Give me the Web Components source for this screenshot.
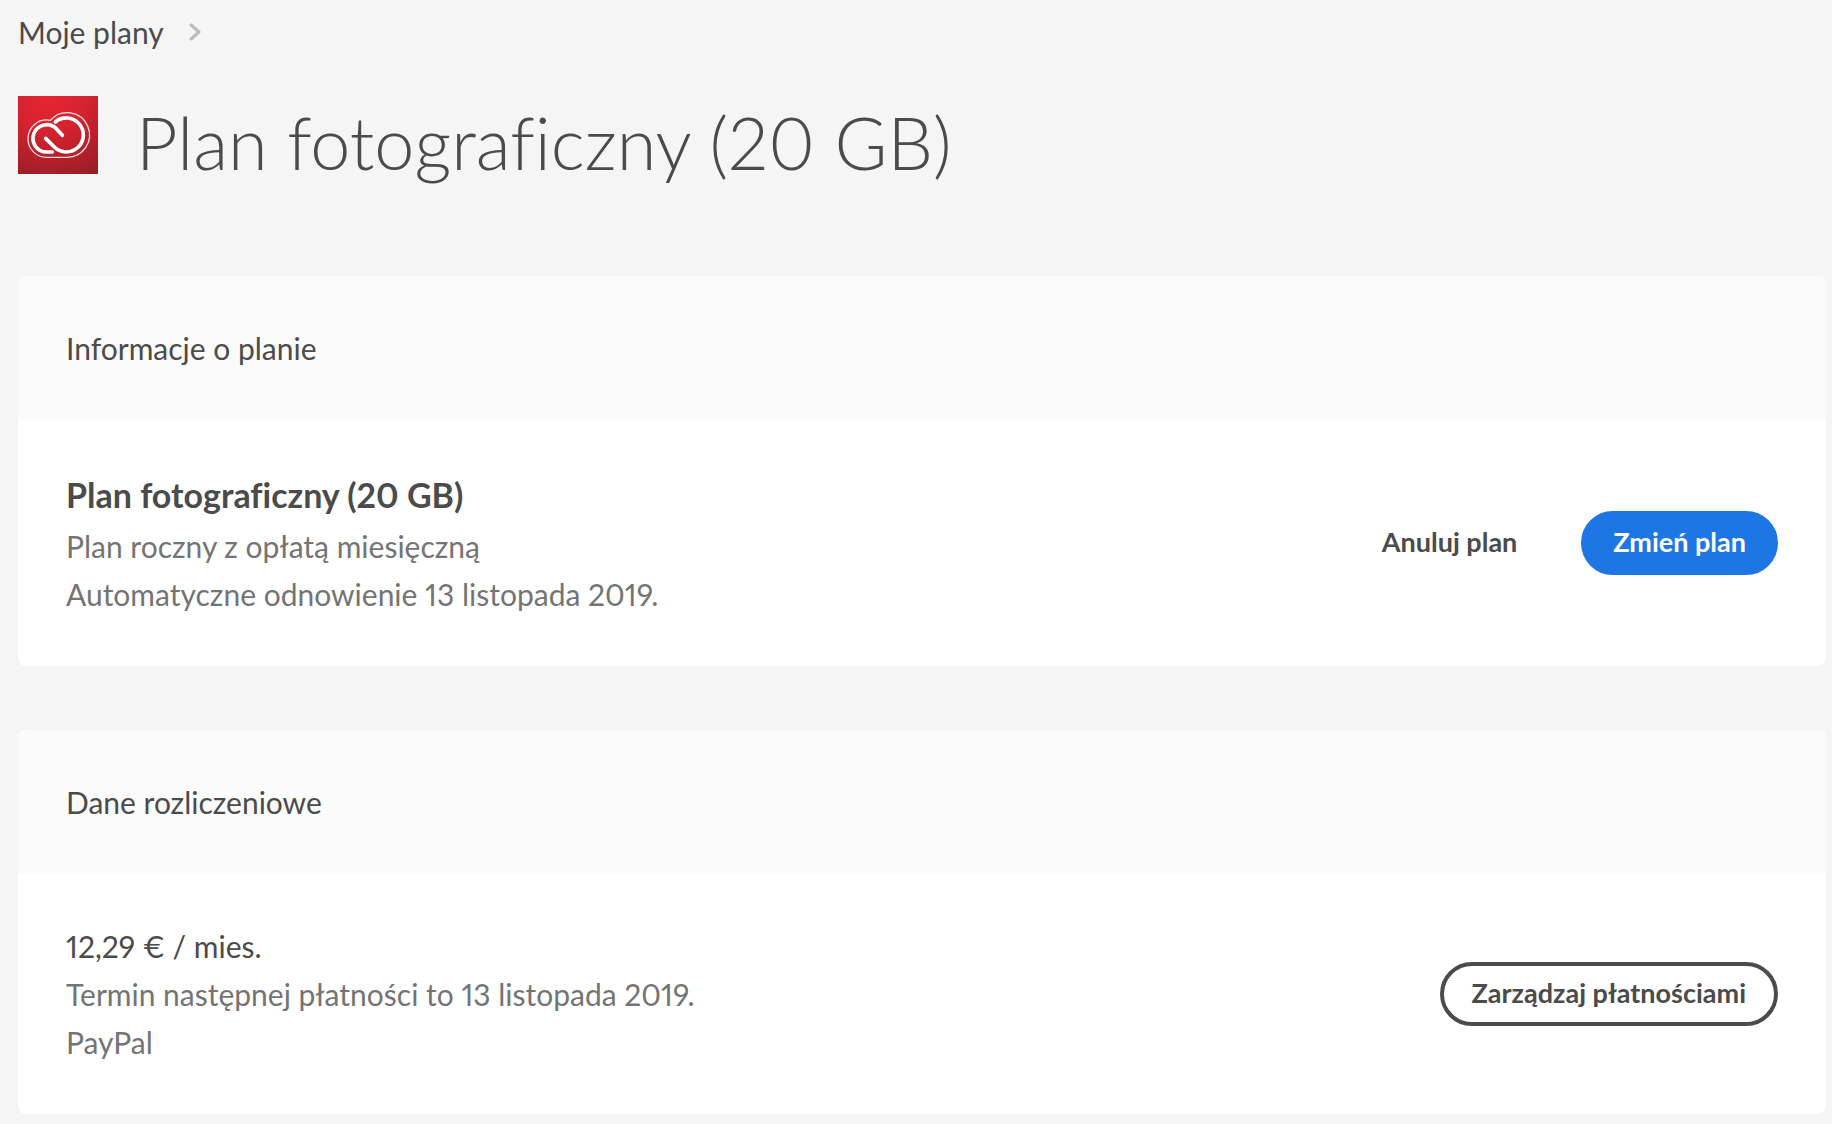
<!DOCTYPE html>
<html lang="pl">
<head>
  <meta charset="utf-8">
  <meta name="viewport" content="width=device-width, initial-scale=1">
  <title>Plan fotograficzny (20 GB)</title>
  <style>
    body {
      background: #f5f5f5;
      color: #4b4b4b;
      font-family: Lato, "Open Sans", sans-serif;
      font-size: 30px;
      font-variant-ligatures: none;
      font-variant-numeric: proportional-nums;
      line-height: 48px;
      margin: 0;
    }
  </style>
</head>
<body>
  <plan-page>
    <bread-crumb slot="nav" href="#plany">Moje plany</bread-crumb>
    <plan-title slot="title">Plan fotograficzny (20 GB)</plan-title>

    <info-card>
      <span slot="header">Informacje o planie</span>
      <info-line kind="title">Plan fotograficzny (20 GB)</info-line>
      <info-line>Plan roczny z opłatą miesięczną</info-line>
      <info-line>Automatyczne odnowienie 13 listopada 2019.</info-line>
      <pill-button slot="actions" kind="quiet">Anuluj plan</pill-button>
      <pill-button slot="actions" kind="cta">Zmień plan</pill-button>
    </info-card>

    <info-card>
      <span slot="header">Dane rozliczeniowe</span>
      <info-line kind="strong">12,29 € / mies.</info-line>
      <info-line>Termin następnej płatności to 13 listopada 2019.</info-line>
      <info-line>PayPal</info-line>
      <pill-button slot="actions">Zarządzaj płatnościami</pill-button>
    </info-card>
  </plan-page>

  <script>
    // Page frame: breadcrumb, title, then the cards
    class PlanPage extends HTMLElement {
      constructor() {
        super();
        const shadow = this.attachShadow({mode: 'open'});
        shadow.innerHTML = `
          <style>
            :host {
              display: block;
              padding: 8px 6px 10px 18px;
            }
            header {
              margin: 40px 0 88px;
            }
            main {
              display: flex;
              flex-direction: column;
              gap: 64px;
            }
          </style>
          <slot name="nav"></slot>
          <header><slot name="title"></slot></header>
          <main><slot></slot></main>
        `;
      }
    }

    class BreadCrumb extends HTMLElement {
      constructor() {
        super();
        const shadow = this.attachShadow({mode: 'open'});
        shadow.innerHTML = `
          <style>
            :host {
              display: block;
            }
            nav {
              align-items: center;
              display: flex;
              gap: 25px;
            }
            a {
              color: inherit;
              text-decoration: none;
            }
            svg {
              display: block;
              height: 18px;
              width: 12px;
            }
          </style>
          <nav>
            <a href="${this.getAttribute('href')}"><slot></slot></a>
            <svg viewBox="0 0 12 18" aria-hidden="true">
              <path d="M2 2l8 7-8 7" fill="none" stroke="#bcbcbc" stroke-width="3" stroke-linecap="round" stroke-linejoin="round"/>
            </svg>
          </nav>
        `;
      }
    }

    // Red Creative Cloud tile with the plan name next to it
    class PlanTitle extends HTMLElement {
      constructor() {
        super();
        const shadow = this.attachShadow({mode: 'open'});
        shadow.innerHTML = `
          <style>
            :host {
              align-items: flex-start;
              display: flex;
              gap: 38px;
            }
            svg {
              flex: none;
              height: 78px;
              width: 80px;
            }
            h1 {
              font-size: 72px;
              font-weight: 300;
              line-height: 92px;
              margin: 0;
            }
          </style>
          <svg viewBox="0 0 240 234" aria-hidden="true">
            <defs>
              <radialGradient id="tile" cx="0.4" cy="0" r="1.15">
                <stop offset="0" stop-color="#e82431"/>
                <stop offset="0.4" stop-color="#d5232f"/>
                <stop offset="1" stop-color="#951d25"/>
              </radialGradient>
            </defs>
            <rect width="240" height="234" fill="url(#tile)"/>
            <g fill="none" stroke="#fff" stroke-linecap="round" stroke-linejoin="round">
              <path stroke-width="4" opacity="0.85" d="M86 184A56 56 0 0 1 30 128A56 56 0 0 1 97 73A67 67 0 1 1 146 184Z"/>
              <path stroke-width="11" d="M133 118L115 98A41 41 0 1 0 86 168H103"/>
              <path stroke-width="11" d="M112 78A51 51 0 1 1 109 153L83 127"/>
            </g>
          </svg>
          <h1><slot></slot></h1>
        `;
      }
    }

    class InfoCard extends HTMLElement {
      constructor() {
        super();
        const shadow = this.attachShadow({mode: 'open'});
        shadow.innerHTML = `
          <style>
            :host {
              background: #fff;
              border-radius: 8px;
              display: block;
              overflow: hidden;
            }
            h2 {
              background: #fbfbfb;
              font-size: inherit;
              font-weight: 400;
              margin: 0;
              padding: 48px;
            }
            .body {
              align-items: center;
              display: flex;
              gap: 32px;
              justify-content: space-between;
              padding: 48px;
            }
            .actions {
              display: flex;
              flex: none;
              gap: 32px;
            }
          </style>
          <section>
            <h2><slot name="header"></slot></h2>
            <div class="body">
              <div><slot></slot></div>
              <div class="actions"><slot name="actions"></slot></div>
            </div>
          </section>
        `;
      }
    }

    // One line of card text, kind: "title", "strong" or none
    class InfoLine extends HTMLElement {
      constructor() {
        super();
        const shadow = this.attachShadow({mode: 'open'});
        shadow.innerHTML = `
          <style>
            :host {
              color: #747474;
              display: block;
            }
            :host([kind="strong"]) {
              color: #4b4b4b;
            }
            :host([kind="title"]) {
              color: #4b4b4b;
              font-size: 34px;
              font-weight: 700;
              line-height: 54px;
            }
          </style>
          <slot></slot>
        `;
      }
    }

    // Rounded button, kind: "cta", "quiet" or none for the outlined one
    class PillButton extends HTMLElement {
      constructor() {
        super();
        const shadow = this.attachShadow({mode: 'open'});
        shadow.innerHTML = `
          <style>
            :host {
              display: block;
            }
            button {
              background: transparent;
              border: 4px solid #4b4b4b;
              border-radius: 32px;
              color: #4b4b4b;
              cursor: pointer;
              display: block;
              font: inherit;
              font-size: 27px;
              font-weight: 700;
              height: 64px;
              line-height: 32px;
              padding: 0 28px 2px;
            }
            :host([kind="quiet"]) button {
              border-color: transparent;
            }
            :host([kind="cta"]) button {
              background: #1d76e3;
              border-color: #1d76e3;
              color: #fff;
            }
          </style>
          <button type="button"><slot></slot></button>
        `;
      }
    }

    customElements.define('plan-page', PlanPage);
    customElements.define('bread-crumb', BreadCrumb);
    customElements.define('plan-title', PlanTitle);
    customElements.define('info-card', InfoCard);
    customElements.define('info-line', InfoLine);
    customElements.define('pill-button', PillButton);
  </script>
</body>
</html>
